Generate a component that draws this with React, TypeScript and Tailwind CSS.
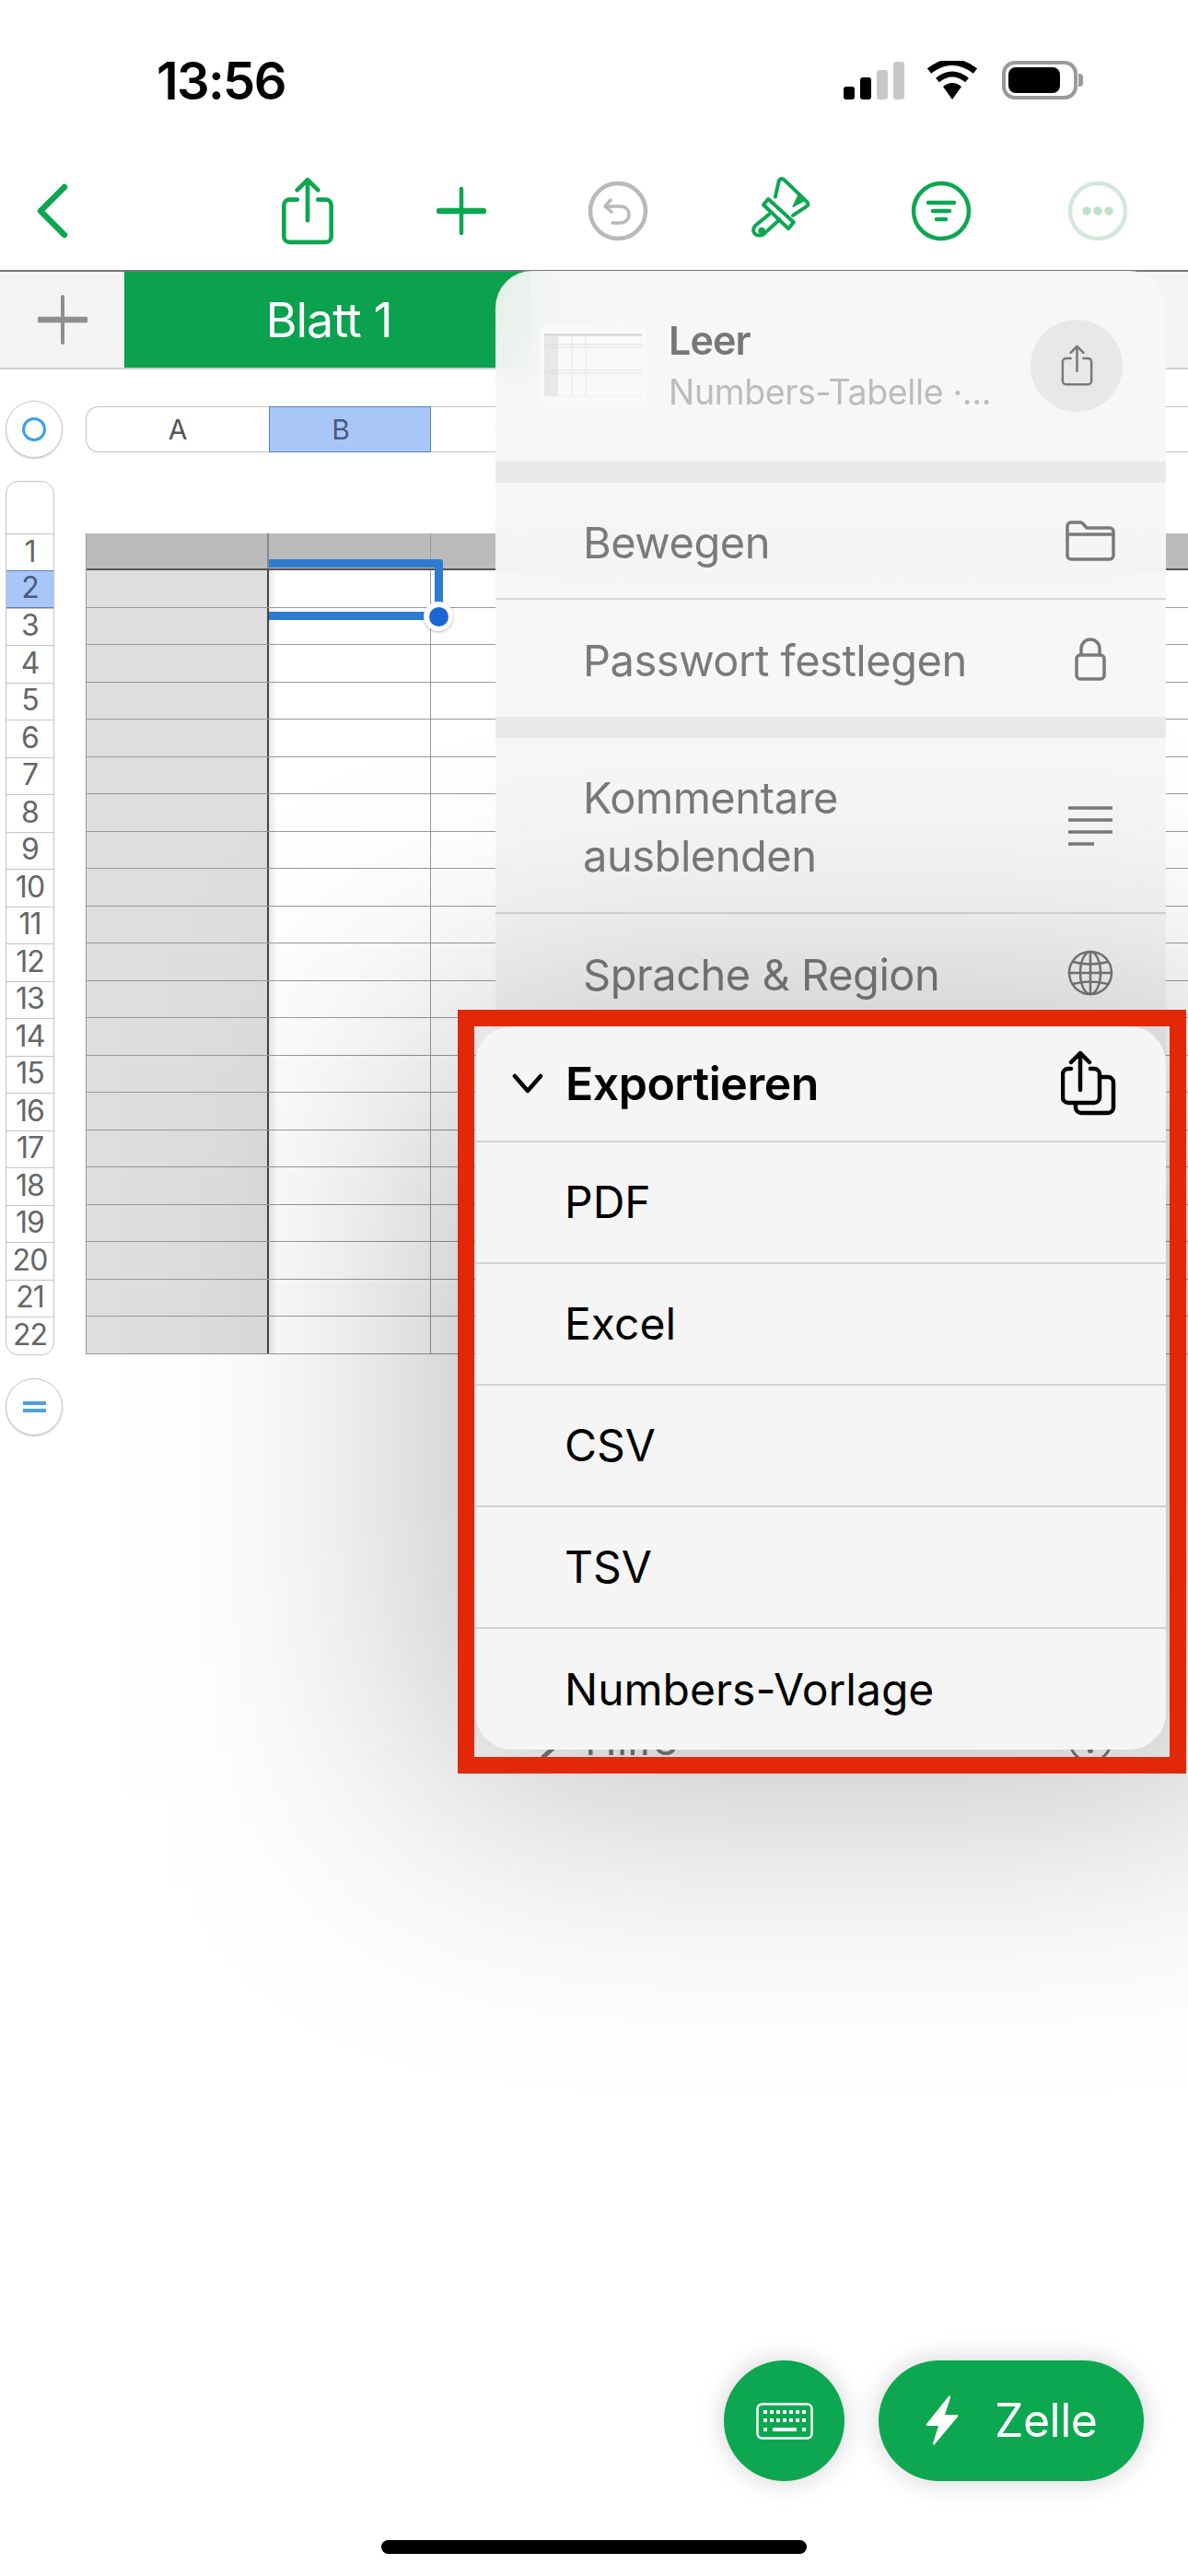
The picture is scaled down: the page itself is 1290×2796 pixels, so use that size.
import React from "react";

const G = "#0ca750";

function ShareGlyph({ w, h, sw, className }: { w: number; h: number; sw: number; className?: string }) {
  return (
    <svg width={w} height={h} viewBox="0 0 56 72" fill="none" stroke="currentColor" strokeWidth={sw} strokeLinecap="round" strokeLinejoin="round" className={className}>
      <path d="M17 24H9a6 6 0 0 0-6 6v33a6 6 0 0 0 6 6h38a6 6 0 0 0 6-6V30a6 6 0 0 0-6-6h-8" />
      <path d="M28 46V3M17 14 28 3l11 11" />
    </svg>
  );
}

function CircleIcon({ color, children }: { color: string; children: React.ReactNode }) {
  return (
    <svg width="66" height="66" viewBox="0 0 66 66" fill="none" stroke={color} strokeWidth="4.5" strokeLinecap="round" strokeLinejoin="round">
      <circle cx="33" cy="33" r="30" />
      {children}
    </svg>
  );
}

function Toolbar() {
  return (
    <div className="h-[183px] flex items-center pt-[54px] text-[#0ca750]">
      <svg width="34" height="60" viewBox="0 0 34 60" fill="none" stroke={G} strokeWidth="6.5" strokeLinecap="round" strokeLinejoin="round" className="ml-[40px]">
        <path d="M30 4 4 30l26 26" />
      </svg>
      <ShareGlyph w={58} h={74} sw={4.5} className="ml-[231px]" />
      <svg width="54" height="54" viewBox="0 0 54 54" stroke={G} strokeLinecap="round" className="ml-[111px]">
        <path d="M27 3v48" strokeWidth="4.5" />
        <path d="M3 27h48" strokeWidth="6.5" />
      </svg>
      <div className="ml-[110px]">
        <CircleIcon color="#b9b9b9">
          <path d="M25 21 19 28l7 6M19 28h17a9 9 0 0 1 0 18h-9" strokeWidth="3.5" />
        </CircleIcon>
      </div>
      <svg width="75" height="80" viewBox="45 20 240 260" fill="none" stroke={G} strokeWidth="13" strokeLinejoin="round" strokeLinecap="round" className="ml-[105px]">
        <path d="M150 100 163 42q8-10 18-2l81 78q8 10-2 16l-48 32" />
        <path d="M125 108 108 128l88 84 19-22z" />
        <path d="M136 155 78 203q-13 20 5 31 20 7 32-8l50-46" />
        <circle cx="102" cy="220" r="6" fill={G} />
        <path d="M212 135 232 92l20 22z" fill={G} strokeWidth="4" />
      </svg>
      <div className="ml-[105px]">
        <CircleIcon color={G}>
          <path d="M19 24h28M24 33h18M28 42h10" />
        </CircleIcon>
      </div>
      <div className="ml-[104px]">
        <CircleIcon color="#d3e8dc">
          <circle cx="21" cy="33" r="2.5" fill="#bfe0cd" stroke="#bfe0cd" />
          <circle cx="33" cy="33" r="2.5" fill="#bfe0cd" stroke="#bfe0cd" />
          <circle cx="45" cy="33" r="2.5" fill="#bfe0cd" stroke="#bfe0cd" />
        </CircleIcon>
      </div>
    </div>
  );
}

function StatusBar() {
  return (
    <div className="h-[110px] flex items-end">
      <span className="ml-[170px] text-[56px] leading-[56px] font-semibold tracking-[-0.03em] text-black mb-[-6px]">13:56</span>
      <div className="ml-auto flex items-end mr-[114px] mb-[2px]">
        <div className="flex items-end gap-[6px]">
          <div className="w-[12px] h-[14px] rounded-[3px] bg-black" />
          <div className="w-[12px] h-[24px] rounded-[3px] bg-black" />
          <div className="w-[12px] h-[32px] rounded-[3px] bg-[#c8c8c8]" />
          <div className="w-[12px] h-[41px] rounded-[3px] bg-[#c8c8c8]" />
        </div>
        <svg width="58" height="42" viewBox="0 0 58 42" className="ml-[23px]">
          <path d="M29 42 19 28q10-8 20 0z" fill="#000" />
          <path d="M13 21q16-13 32 0" stroke="#000" strokeWidth="6" fill="none" />
          <path d="M4 11q25-19 50 0" stroke="#000" strokeWidth="7" fill="none" />
        </svg>
        <div className="ml-[25px] flex items-center">
          <div className="w-[82px] h-[42px] rounded-[14px] border-[4px] border-[#9a9a9a] p-[3px]">
            <div className="w-[56px] h-full rounded-[8px] bg-black" />
          </div>
          <div className="w-[5px] h-[14px] rounded-r-[4px] bg-[#9a9a9a] ml-[1px]" />
        </div>
      </div>
    </div>
  );
}

function Tabs() {
  return (
    <div className="h-[108px] flex bg-[#f4f4f4] border-t-[2px] border-t-[#777] border-b-[2px] border-b-[#cfcfcf]">
      <div className="w-[135px] flex items-center justify-center">
        <svg width="54" height="54" viewBox="0 0 54 54" stroke="#8e8e93" strokeLinecap="round">
          <path d="M27 2v50" strokeWidth="4" />
          <path d="M2 27h50" strokeWidth="6.5" />
        </svg>
      </div>
      <div className="w-[442px] bg-[#0ba14f] flex items-center justify-center pt-[2px] pl-[2px] text-white text-[52px] tracking-[-0.02em] font-normal">Blatt 1</div>
    </div>
  );
}

const RowH = [40, ...Array(21).fill(40.5)] as number[];

function Sheet() {
  return (
    <div>
      <div className="h-[62px] mt-[34px] flex items-center">
        <div className="ml-[6px] w-[62px] h-[62px] rounded-full bg-white border border-[#c8c8c8] shadow-[0_1px_2px_rgba(0,0,0,0.2)] flex items-center justify-center">
          <div className="w-[26px] h-[26px] rounded-full border-[3px] border-[#3f9fe6]" />
        </div>
        <div className="ml-[25px] flex-1 h-[50px] flex text-[30px] text-[#555]">
          <div className="w-[199px] rounded-l-[14px] bg-white border border-r-0 border-[#c4c4c4] flex items-center justify-center">A</div>
          <div className="w-[176px] bg-[#a8c7f8] border border-[#5d80b5] flex items-center justify-center pr-[20px] text-[#4a5a7a]">B</div>
          <div className="flex-1 border-y border-[#c4c4c4] bg-white" />
        </div>
      </div>
      <div className="flex mt-[25px]">
        <div className="ml-[6px] w-[53px] rounded-[14px] border border-[#c4c4c4] bg-white overflow-hidden shrink-0">
          <div className="h-[56px]" />
          {RowH.map((h, i) => (
            <div
              key={i}
              style={{ height: h }}
              className={
                i === 1
                  ? "border-y border-[#5d80b5] bg-[#a8c7f8] text-[#4a5a7a] flex items-center justify-center pb-[2px] text-[32px] tracking-[-0.03em]"
                  : "border-t border-[#c4c4c4] text-[#666] flex items-center justify-center pb-[2px] text-[32px] tracking-[-0.03em]"
              }
            >
              {i + 1}
            </div>
          ))}
        </div>
        <div className="ml-[34px] flex-1 pt-[57px]">
          <div className="relative border-l border-[#999]">
            {RowH.map((h, i) => (
              <div key={i} style={{ height: h }} className={i === 0 ? "flex border-b-[2px] border-[#555]" : "flex border-b border-[#999]"}>
                <div className={i === 0 ? "w-[198px] bg-[#bbbbbb] border-r-[2px] border-[#8a8a8a]" : "w-[198px] bg-[#dedede] border-r-[2px] border-[#444]"} />
                <div className={i === 0 ? "w-[176px] bg-[#bbbbbb] border-r border-[#999]" : "w-[176px] bg-white border-r border-[#999] bg-gradient-to-r from-[#e6e6e6] from-[0px] to-white to-[9px]"} />
                <div className={i === 0 ? "flex-1 bg-[#bbbbbb]" : "flex-1 bg-white"} />
              </div>
            ))}
            <div className="absolute left-[198px] top-[28px] w-[189px] h-[9px] bg-[#2f7bd0] rounded-tr-[4px]" />
            <div className="absolute left-[378px] top-[28px] w-[9px] h-[55px] bg-[#2f7bd0] rounded-tr-[4px]" />
            <div className="absolute left-[198px] top-[85px] w-[180px] h-[9px] bg-[#2f7bd0]" />
            <div className="absolute left-[366px] top-[74px] w-[32px] h-[32px] rounded-full bg-white shadow-[0_1px_3px_rgba(0,0,0,0.3)] flex items-center justify-center">
              <div className="w-[21px] h-[21px] rounded-full bg-[#1a66d4]" />
            </div>
          </div>
        </div>
      </div>
      <div className="ml-[6px] mt-[25px] w-[62px] h-[62px] rounded-full bg-white border border-[#c8c8c8] shadow-[0_1px_2px_rgba(0,0,0,0.2)] flex flex-col items-center justify-center gap-[4px]">
        <div className="w-[25px] h-[4px] bg-[#4d9fe0]" />
        <div className="w-[25px] h-[4px] bg-[#4d9fe0]" />
      </div>
    </div>
  );
}

function Thumb() {
  return (
    <svg width="116" height="88" viewBox="0 0 116 88" className="shrink-0 ml-[48px]">
      <rect width="116" height="88" rx="9" fill="#f9f9f9" />
      <rect x="5" y="9" width="106" height="3" fill="#dcdcdc" />
      <rect x="5" y="12" width="15" height="65" fill="#e8e8e8" />
      <path d="M5 21h106M5 24h106M5 49h106M5 52h106" stroke="#dcdcdc" strokeWidth="0.8" />
      <path d="M35 12v65M50 12v65" stroke="#e2e2e2" strokeWidth="0.8" />
      <path d="M5 77h106" stroke="#ececec" strokeWidth="0.8" />
    </svg>
  );
}

function Row({ label, tall, icon, border }: { label: React.ReactNode; tall?: boolean; icon: React.ReactNode; border?: boolean }) {
  return (
    <div className={(border ? "border-b-[2px] border-[#d8d8d8] " : "") + "flex items-center pl-[95px] " + (tall ? "h-[191px]" : "h-[127px]")}>
      <div className="flex-1 pt-[3px] text-[47px] leading-[63px] text-[#7a7a7a] tracking-[-0.01em]">{label}</div>
      <div className="w-[54px] mr-[55px] flex justify-center">{icon}</div>
    </div>
  );
}

const grayIcon = { fill: "none", stroke: "#7a7a7a", strokeLinecap: "round", strokeLinejoin: "round" } as const;

function Menu() {
  return (
    <div className="absolute left-[538px] top-[294px] w-[728px] h-[1663px] rounded-[40px] bg-gradient-to-b from-[#f6f6f6]/[0.93] from-[55%] to-[#ffffff] to-[97%] backdrop-blur-[30px]">
      <div className="h-[207px] flex items-center pb-[2px]">
        <Thumb />
        <div className="ml-[24px] flex-1 min-w-0 flex flex-col">
          <span className="text-[43px] leading-[52px] font-semibold text-[#777] tracking-[-0.02em]">Leer</span>
          <span className="text-[37.5px] leading-[50px] text-[#bcbcbc] mt-[6px] tracking-[-0.01em] whitespace-nowrap">Numbers-Tabelle ·...</span>
        </div>
        <div className="w-[100px] h-[100px] rounded-full bg-[#e8e8e8] mr-[47px] flex items-center justify-center text-[#7a7a7a]">
          <ShareGlyph w={35} h={45} sw={4} />
        </div>
      </div>
      <div className="h-[23px] bg-[#e9e9e9]" />
      <Row
        label="Bewegen"
        border
        icon={
          <svg width="54" height="44" viewBox="0 0 54 44" {...grayIcon} strokeWidth="3.5">
            <path d="M2 14V6a4 4 0 0 1 4-4h10a4 4 0 0 1 3 1.500L23 8h25a4 4 0 0 1 4 4v26a4 4 0 0 1-4 4H6a4 4 0 0 1-4-4z" />
            <path d="M2 15h50" />
          </svg>
        }
      />
      <Row
        label="Passwort festlegen"
        icon={
          <svg width="34" height="48" viewBox="0 0 34 48" {...grayIcon} strokeWidth="3.5">
            <rect x="2" y="20" width="30" height="26" rx="4" />
            <path d="M7 20v-7a10 10 0 0 1 20 0v7" />
          </svg>
        }
      />
      <div className="h-[23px] bg-[#e9e9e9]" />
      <Row
        tall
        border
        label={<>Kommentare<br />ausblenden</>}
        icon={
          <svg width="48" height="44" viewBox="0 0 48 44" {...grayIcon} strokeWidth="3.5" strokeLinecap="butt">
            <path d="M0 3h48M0 16h48M0 29h48M0 42h28" />
          </svg>
        }
      />
      <Row
        label="Sprache & Region"
        icon={
          <svg width="50" height="50" viewBox="0 0 50 50" {...grayIcon} strokeWidth="2.5">
            <circle cx="25" cy="25" r="23" />
            <ellipse cx="25" cy="25" rx="11" ry="23" />
            <path d="M25 2v46M2 25h46M6 13q19 5 38 0M6 37q19-5 38 0" />
          </svg>
        }
      />
      <div className="h-[704px]" />
      <div className="h-[130px] flex items-center pl-[46px]">
        <svg width="34" height="44" viewBox="0 0 34 44" {...grayIcon} strokeWidth="5">
          <path d="M6 3l21 19L6 41" />
        </svg>
        <span className="ml-[17px] flex-1 text-[47px] text-[#7a7a7a]">Hilfe</span>
        <svg width="48" height="48" viewBox="0 0 48 48" {...grayIcon} strokeWidth="3" className="mr-[58px] mt-[4px]">
          <circle cx="24" cy="24" r="22" />
          <circle cx="24" cy="34" r="1.5" fill="#7a7a7a" />
        </svg>
      </div>
    </div>
  );
}

function ExportPanel() {
  const items = ["PDF", "Excel", "CSV", "TSV", "Numbers-Vorlage"];
  return (
    <div className="absolute left-[516px] top-[1114px] w-[750px] h-[785px] rounded-[40px] bg-[#f5f5f5] overflow-hidden text-black">
      <div className="h-[126px] flex items-center border-b-[2px] border-[#d2d2d2]">
        <svg width="34" height="22" viewBox="0 0 34 22" fill="none" stroke="#000" strokeWidth="4.500" strokeLinecap="round" strokeLinejoin="round" className="ml-[40px]">
          <path d="M3 3l14 16L31 3" />
        </svg>
        <span className="ml-[24px] flex-1 text-[50px] font-semibold tracking-[-0.01em]">Exportieren</span>
        <svg width="60" height="70" viewBox="0 0 60 70" fill="none" stroke="#000" strokeWidth="4.5" strokeLinecap="round" strokeLinejoin="round" className="mr-[54px]">
          <path d="M11 19H8a6 6 0 0 0-6 6v25a6 6 0 0 0 6 6h28a6 6 0 0 0 6-6V25a6 6 0 0 0-6-6h-4" />
          <path d="M21 42V2M11 12 21 2l10 10" />
          <path d="M42 28h9a6 6 0 0 1 6 6v27a6 6 0 0 1-6 6H22a6 6 0 0 1-6-6v-5" />
        </svg>
      </div>
      {items.map((t, i) => (
        <div key={t} className={(i < 4 ? "border-b-[2px] border-[#d2d2d2] " : "") + "h-[132px] flex items-center pl-[97px] text-[48px]"}>
          {t}
        </div>
      ))}
    </div>
  );
}

export default function App() {
  return (
    <div className="relative w-[1290px] h-[2796px] bg-white overflow-hidden" style={{ fontFamily: "Inter, 'Liberation Sans', sans-serif" }}>
      <StatusBar />
      <Toolbar />
      <Tabs />
      <Sheet />
      <Menu />
      <div className="absolute left-[460px] top-[1110px] w-[920px] h-[840px] bg-black/[0.26] blur-[150px]" />
      <ExportPanel />
      <div className="absolute left-[497px] top-[1096px] w-[791px] h-[829px] border-[18px] border-[#e32808]" />
      <div className="absolute left-[786px] top-[2562px] flex gap-[37px]">
        <div className="w-[131px] h-[131px] rounded-full bg-[#0ca750] shadow-[0_0_30px_rgba(0,0,0,0.18)] flex items-center justify-center">
          <svg width="62" height="40" viewBox="0 0 62 40" fill="none" stroke="#fff" strokeWidth="2.500">
            <rect x="1.500" y="1.500" width="59" height="37" rx="5" />
            <path d="M8 10h46M8 19h46" strokeWidth="4" strokeDasharray="4 3" />
            <path d="M8 29h4M18 29h26M50 29h4" strokeWidth="4" />
          </svg>
        </div>
        <div className="w-[288px] h-[131px] rounded-full bg-[#0ca750] shadow-[0_0_30px_rgba(0,0,0,0.18)] flex items-center text-white text-[50px] tracking-[-0.01em]">
          <svg width="36" height="55" viewBox="0 0 36 55" fill="#fff" className="ml-[51px]">
            <path d="M25 1 1 31q-1 2 1 2h12L8 52q0 3 2 1L35 23q1-2-1-2H21L27 2q0-3-2-1z" />
          </svg>
          <span className="ml-[39px]">Zelle</span>
        </div>
      </div>
      <div className="absolute left-[414px] top-[2757px] w-[462px] h-[15px] rounded-full bg-black" />
    </div>
  );
}
